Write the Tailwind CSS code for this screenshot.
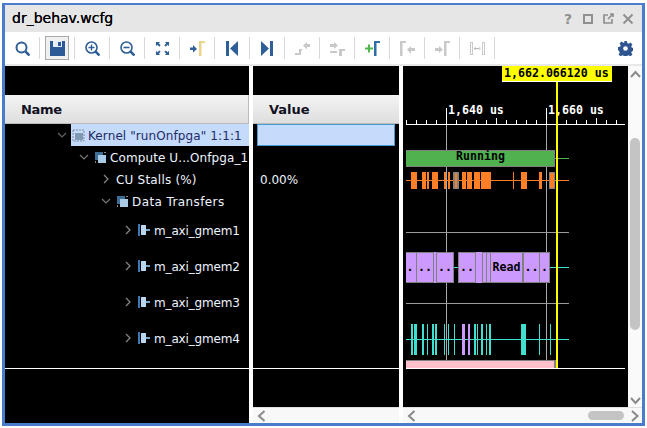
<!DOCTYPE html>
<html lang="en">
<head>
    <meta charset="UTF-8">
    <title>dr_behav.wcfg</title>
    <script src="https://cdn.jsdelivr.net/npm/@tailwindcss/browser@4"></script>
</head>
<body class="bg-white w-[647px] h-[428px] overflow-hidden font-['DejaVu_Sans',sans-serif]">
<div class="ml-[2px] mt-[3px] w-[643px] h-[423px] border-[3px] border-t-[2px] border-[#4a7ccc] flex flex-col bg-white">

    <!-- Title bar -->
    <div class="h-[27px] bg-[#e6e6e6] flex items-center pl-[7px] pr-[7px] shrink-0">
        <span class="text-[14px] text-black [text-shadow:0_0_0.4px_#000]">dr_behav.wcfg</span>
        <div class="ml-auto flex items-center gap-[6px] text-[#909090]">
            <span class="w-[14px] text-center text-[14px] font-bold leading-none">?</span>
            <svg class="w-[14px] h-[14px]" viewBox="0 0 14 14" fill="none" stroke="currentColor" stroke-width="2"><rect x="3" y="3" width="8" height="8"/></svg>
            <svg class="w-[14px] h-[14px]" viewBox="0 0 14 14" fill="none" stroke="currentColor" stroke-width="1.700"><path d="M7 3H3v8h8V7M7 7l5-5M9 2h3v3"/></svg>
            <svg class="w-[14px] h-[14px]" viewBox="0 0 14 14" fill="none" stroke="currentColor" stroke-width="2"><path d="M2.500 2.500l9 9M11.500 2.500l-9 9"/></svg>
        </div>
    </div>

    <!-- Toolbar -->
    <div class="h-[32px] bg-white flex items-center shrink-0">
        <div class="w-[35px] h-[22px] flex items-center justify-center border-r border-[#d8d8d8]">
            <svg class="w-[15px] h-[15px]" viewBox="0 0 15 15" fill="none" stroke="#2f5f97" stroke-width="2"><circle cx="6.500" cy="6.500" r="5"/><path d="M10.500 10.500l4 4" stroke-width="2.500"/></svg>
        </div>
        <div class="w-[35px] h-[22px] flex items-center justify-center border-r border-[#d8d8d8]">
            <div class="w-[24px] h-[24px] bg-[#f0f0f0] border border-[#aaaaaa] flex items-center justify-center">
                <svg class="w-[15px] h-[15px]" viewBox="0 0 15 15"><path d="M0 0h15v15H0z" fill="#2b5a97"/><path d="M3 0h9v6H3z" fill="#e8eef6"/><path d="M8 1h3v4H8z" fill="#2b5a97"/></svg>
            </div>
        </div>
        <div class="w-[35px] h-[22px] flex items-center justify-center border-r border-[#d8d8d8]">
            <svg class="w-[15px] h-[15px]" viewBox="0 0 15 15" fill="none" stroke="#2f5f97" stroke-width="1.600"><circle cx="6.500" cy="6.500" r="5.500"/><path d="M3.500 6.500h6M6.500 3.500v6" stroke-width="1.400"/><path d="M10.500 10.500l4 4" stroke-width="2.500"/></svg>
        </div>
        <div class="w-[35px] h-[22px] flex items-center justify-center border-r border-[#d8d8d8]">
            <svg class="w-[15px] h-[15px]" viewBox="0 0 15 15" fill="none" stroke="#2f5f97" stroke-width="1.600"><circle cx="6.500" cy="6.500" r="5.500"/><path d="M3.500 6.500h6" stroke-width="1.600"/><path d="M10.500 10.500l4 4" stroke-width="2.500"/></svg>
        </div>
        <div class="w-[35px] h-[22px] flex items-center justify-center border-r border-[#d8d8d8]">
            <svg class="w-[15px] h-[15px]" viewBox="0 0 16 16" fill="#2f5f97"><path d="M1 1h4.500L4 2.500 6 4.500 4.500 6 2.500 4 1 5.500zM15 1v4.500L13.500 4l-2 2L10 4.500l2-2L10.500 1zM1 15v-4.500L2.500 12l2-2L6 11.500l-2 2L5.500 15zM15 15h-4.500l1.500-1.500-2-2 1.500-1.500 2 2 1.500-1.500z"/></svg>
        </div>
        <div class="w-[35px] h-[22px] flex items-center justify-center border-r border-[#d8d8d8]">
            <svg class="w-[15px] h-[15px]" viewBox="0 0 15 15"><path d="M0 6.500h3V4l4 4-4 3.500V9H0z" fill="#2f5f97"/><path d="M9 0h6v2h-3.500v13H9z" fill="#e8d48a"/></svg>
        </div>
        <div class="w-[35px] h-[22px] flex items-center justify-center border-r border-[#d8d8d8]">
            <svg class="w-[15px] h-[15px]" viewBox="0 0 15 15" fill="#2f5f97"><path d="M1 0h3v15H1zM13 0v15L5 7.500z"/></svg>
        </div>
        <div class="w-[35px] h-[22px] flex items-center justify-center border-r border-[#d8d8d8]">
            <svg class="w-[15px] h-[15px]" viewBox="0 0 15 15" fill="#2f5f97"><path d="M10 0h3v15h-3zM1 0v15l8-7.500z"/></svg>
        </div>
        <div class="w-[35px] h-[22px] flex items-center justify-center border-r border-[#d8d8d8]">
            <svg class="w-[15px] h-[15px]" viewBox="0 0 15 15" fill="#c9c9c9"><path d="M15 3v3h-3v2.500L8 4.500 12 1v2zM4 8h3v2H6v4H4z"/><path d="M0 12h6v2H0z"/></svg>
        </div>
        <div class="w-[35px] h-[22px] flex items-center justify-center border-r border-[#d8d8d8]">
            <svg class="w-[15px] h-[15px]" viewBox="0 0 15 15" fill="#c9c9c9"><path d="M0 3h4V1l4 3.500L4 8V6H0zM9 8h6v2h-3v5H9z"/><path d="M0 10h7v2H0z"/></svg>
        </div>
        <div class="w-[35px] h-[22px] flex items-center justify-center border-r border-[#d8d8d8]">
            <svg class="w-[15px] h-[15px]" viewBox="0 0 15 15"><path d="M0 6.500h3v-3h2v3h3v2H5v3H3v-3H0z" fill="#4cb84c"/><path d="M9 0h6v2h-3.500v13H9z" fill="#2f6da8"/></svg>
        </div>
        <div class="w-[35px] h-[22px] flex items-center justify-center border-r border-[#d8d8d8]">
            <svg class="w-[15px] h-[15px]" viewBox="0 0 15 15" fill="#c9c9c9"><path d="M0 0h6v2H2.500v13H0zM15 7v3h-4v3L7 8.500 11 5v2z"/></svg>
        </div>
        <div class="w-[35px] h-[22px] flex items-center justify-center border-r border-[#d8d8d8]">
            <svg class="w-[15px] h-[15px]" viewBox="0 0 15 15" fill="#c9c9c9"><path d="M0 7h4V5l4 3.500L4 12v-2H0zM9 0h6v2h-3.500v13H9z"/></svg>
        </div>
        <div class="w-[35px] h-[22px] flex items-center justify-center border-r border-[#d8d8d8]">
            <svg class="w-[15px] h-[15px]" viewBox="0 0 15 15"><path d="M0 1h3v13H0zM12 1h3v13h-3z" fill="#c9c9c9"/><path d="M1 2h1v11H1zM13 2h1v11h-1z" fill="#fff"/><path d="M4 7h7v1H4zM5.500 5.500v4L4 7.500zM9.500 5.500v4l1.500-2z" fill="#b5b5b5"/></svg>
        </div>
        <svg class="ml-auto mr-[9px] w-[15px] h-[15px]" viewBox="0 0 16 16" fill="#2f5590"><path fill-rule="evenodd" d="M6.500 0h3l.4 2.200 1.500.7 1.900-1.300 2.100 2.100-1.300 1.900.7 1.500 2.200.4v3l-2.200.4-.7 1.500 1.300 1.900-2.100 2.100-1.900-1.300-1.500.7-.4 2.200h-3l-.4-2.200-1.500-.7-1.900 1.300-2.100-2.100 1.300-1.900-.7-1.500L0 9.500v-3l2.200-.4.7-1.500-1.300-1.900 2.100-2.100 1.900 1.300 1.500-.7zM8 5.500a2.500 2.500 0 100 5 2.500 2.500 0 000-5z"/></svg>
    </div>

    <div class="h-[2px] bg-[#e8e8e8] shrink-0"></div>

    <!-- Panels -->
    <div class="flex flex-1 min-h-0 bg-white">

        <!-- Name column -->
        <div class="w-[244px] bg-black flex flex-col shrink-0">
            <div class="h-[29px] shrink-0"></div>
            <div class="h-[29px] bg-gradient-to-b from-[#f4f4f4] to-[#dedede] border-b border-r border-[#bbbbbb] flex items-center pl-[16px] pt-[2px] text-[13px] font-bold tracking-[-0.3px] text-[#111122] shrink-0">Name</div>
            <div class="h-[22px] flex items-center text-[12px] text-[#1f2a66]">
                <svg class="ml-[52px] w-[10px] h-[10px]" viewBox="0 0 10 10" fill="none" stroke="#666666" stroke-width="1.200"><path d="M1 3l4 4 4-4"/></svg>
                <div class="ml-[4px] flex-1 h-full bg-[#c5dbfb] flex items-center pl-[1px]">
                    <svg class="w-[13px] h-[13px] mr-[3px]" viewBox="0 0 13 13"><path d="M1 1h11v11H1z" fill="none" stroke="#7a8a9a" stroke-dasharray="2 1"/><path d="M3 4h8v7H3z" fill="#7e9ab2"/></svg>
                    <span class="whitespace-nowrap pt-[2px] tracking-[0.1px]">Kernel "runOnfpga" 1:1:1</span>
                </div>
            </div>
            <div class="h-[22px] flex items-center text-[12px] text-[#eef4ff] overflow-hidden">
                <svg class="ml-[74px] w-[10px] h-[10px] shrink-0" viewBox="0 0 10 10" fill="none" stroke="#777777" stroke-width="1.200"><path d="M1 3l4 4 4-4"/></svg>
                <svg class="ml-[5px] mr-[3px] w-[13px] h-[13px] shrink-0" viewBox="0 0 13 13"><path d="M1 1h8v8H1z" fill="#3f6c94"/><path d="M4 4h8v8H4z" fill="#a9cbe6"/><path d="M10 1h2v1h-2zM1 10h1v2H1z" fill="#888888"/></svg>
                <span class="whitespace-nowrap pt-[2px] tracking-[0.1px]">Compute U...Onfpga_1</span>
            </div>
            <div class="h-[22px] flex items-center text-[12px] text-[#eef4ff]">
                <svg class="ml-[96px] w-[10px] h-[10px]" viewBox="0 0 10 10" fill="none" stroke="#888888" stroke-width="1.200"><path d="M3 1l4 4-4 4"/></svg>
                <span class="ml-[5px] whitespace-nowrap pt-[2px] tracking-[0.2px]">CU Stalls (%)</span>
            </div>
            <div class="h-[22px] flex items-center text-[12px] text-[#eef4ff]">
                <svg class="ml-[96px] w-[10px] h-[10px]" viewBox="0 0 10 10" fill="none" stroke="#777777" stroke-width="1.200"><path d="M1 3l4 4 4-4"/></svg>
                <svg class="ml-[5px] mr-[3px] w-[13px] h-[13px]" viewBox="0 0 13 13"><path d="M1 1h8v8H1z" fill="#3f6c94"/><path d="M4 4h8v8H4z" fill="#a9cbe6"/><path d="M10 1h2v1h-2zM1 10h1v2H1z" fill="#888888"/></svg>
                <span class="whitespace-nowrap pt-[2px] tracking-[0.4px]">Data Transfers</span>
            </div>
            <div class="h-[36px] flex items-center text-[12px] text-[#eef4ff]">
                <svg class="ml-[118px] w-[10px] h-[10px]" viewBox="0 0 10 10" fill="none" stroke="#888888" stroke-width="1.200"><path d="M3 1l4 4-4 4"/></svg>
                <svg class="ml-[5px] mr-[3px] w-[13px] h-[12px]" viewBox="0 0 13 12"><path d="M0 0h2v12H0z" fill="#3f78b4"/><path d="M3 1h5v10H3z" fill="#b9d6ee"/><path d="M8 5h4v2H8z" fill="#7fa6c8"/></svg>
                <span class="whitespace-nowrap pt-[2px] tracking-[-0.15px]">m_axi_gmem1</span>
            </div>
            <div class="h-[36px] flex items-center text-[12px] text-[#eef4ff]">
                <svg class="ml-[118px] w-[10px] h-[10px]" viewBox="0 0 10 10" fill="none" stroke="#888888" stroke-width="1.200"><path d="M3 1l4 4-4 4"/></svg>
                <svg class="ml-[5px] mr-[3px] w-[13px] h-[12px]" viewBox="0 0 13 12"><path d="M0 0h2v12H0z" fill="#3f78b4"/><path d="M3 1h5v10H3z" fill="#b9d6ee"/><path d="M8 5h4v2H8z" fill="#7fa6c8"/></svg>
                <span class="whitespace-nowrap pt-[2px] tracking-[-0.15px]">m_axi_gmem2</span>
            </div>
            <div class="h-[36px] flex items-center text-[12px] text-[#eef4ff]">
                <svg class="ml-[118px] w-[10px] h-[10px]" viewBox="0 0 10 10" fill="none" stroke="#888888" stroke-width="1.200"><path d="M3 1l4 4-4 4"/></svg>
                <svg class="ml-[5px] mr-[3px] w-[13px] h-[12px]" viewBox="0 0 13 12"><path d="M0 0h2v12H0z" fill="#3f78b4"/><path d="M3 1h5v10H3z" fill="#b9d6ee"/><path d="M8 5h4v2H8z" fill="#7fa6c8"/></svg>
                <span class="whitespace-nowrap pt-[2px] tracking-[-0.15px]">m_axi_gmem3</span>
            </div>
            <div class="h-[36px] flex items-center text-[12px] text-[#eef4ff]">
                <svg class="ml-[118px] w-[10px] h-[10px]" viewBox="0 0 10 10" fill="none" stroke="#888888" stroke-width="1.200"><path d="M3 1l4 4-4 4"/></svg>
                <svg class="ml-[5px] mr-[3px] w-[13px] h-[12px]" viewBox="0 0 13 12"><path d="M0 0h2v12H0z" fill="#3f78b4"/><path d="M3 1h5v10H3z" fill="#b9d6ee"/><path d="M8 5h4v2H8z" fill="#7fa6c8"/></svg>
                <span class="whitespace-nowrap pt-[2px] tracking-[-0.15px]">m_axi_gmem4</span>
            </div>
            <div class="h-[12px]"></div>
            <div class="h-px bg-white"></div>
        </div>

        <div class="w-[4px] bg-white shrink-0"></div>

        <!-- Value column -->
        <div class="w-[146px] flex flex-col shrink-0">
            <div class="flex-1 bg-black flex flex-col min-h-0">
                <div class="h-[29px] shrink-0"></div>
                <div class="h-[29px] bg-gradient-to-b from-[#f4f4f4] to-[#dedede] border-b border-[#bbbbbb] flex items-center pl-[16px] pt-[2px] text-[13px] font-bold text-[#111122] shrink-0">Value</div>
                <div class="h-[22px] pl-[4px] pr-[4px] shrink-0"><div class="h-full bg-[#c5dbfb] border border-[#4a9ad4]"></div></div>
                <div class="h-[22px] shrink-0"></div>
                <div class="h-[22px] pl-[7px] pt-[2px] flex items-center text-[12px] text-[#eef4ff] shrink-0">0.00%</div>
                <div class="h-[22px] shrink-0"></div>
                <div class="h-[144px] shrink-0"></div>
                <div class="h-[12px] shrink-0"></div>
                <div class="h-px bg-white shrink-0"></div>
            </div>
            <div class="h-[16px] bg-[#f8f8f8] border-t border-[#e0e0e0] flex items-center pl-[4px] shrink-0">
                <svg class="w-[9px] h-[12px]" viewBox="0 0 9 12" fill="none" stroke="#8a8a8a" stroke-width="2"><path d="M7.500 1L2 6l5.500 5"/></svg>
            </div>
        </div>

        <div class="w-[4px] bg-white shrink-0"></div>

        <!-- Waveform -->
        <div class="w-[239px] flex flex-col shrink-0">
            <div class="flex flex-1 min-h-0">
                <svg class="w-[225px] h-[342px] shrink-0 bg-black" viewBox="403 66 225 342" shape-rendering="crispEdges" font-family="'DejaVu Sans Mono', monospace" font-size="11.600" font-weight="bold">
                    <!-- cursors and grid -->
                    <path d="M446 108v260M546 108v260" stroke="#aaaaaa" stroke-width="1" transform="translate(.5 0)"/>
                    <path d="M446 108v16M546 108v16" stroke="#ffffff" transform="translate(.5 0)"/>
                    <!-- ruler -->
                    <rect x="406" y="124" width="219" height="1" fill="#fff"/>
                    <path transform="translate(.5 0)" stroke="#fff" d="M406 120v4M416 120v4M426 120v4M436 120v4M456 120v4M466 120v4M476 120v4M486 120v4M506 120v4M516 120v4M526 120v4M536 120v4M556 120v4M566 120v4M576 120v4M586 120v4M606 120v4M616 120v4M496 118v6M596 118v6"/>
                    <text x="448" y="114" fill="#fff">1,640 us</text>
                    <text x="548" y="114" fill="#fff">1,660 us</text>
                    <!-- running -->
                    <rect x="555" y="158" width="14" height="1" fill="#4fb24f"/>
                    <rect x="406" y="150" width="149" height="17" fill="#808080"/>
                    <rect x="406" y="151" width="148" height="15" fill="#4fb24f"/>
                    <text x="480.500" y="160" fill="#000" text-anchor="middle">Running</text>
                    <!-- CU stalls -->
                    <rect x="406" y="180" width="163" height="1" fill="#ff7f27"/>
                    <path fill="#ff7f27" d="M411 172h6v17h-6zM422 172h4v17h-4zM427 172h2v17h-2zM432 172h6v17h-6zM444 172h2v17h-2zM448 172h2v17h-2zM462 172h4v17h-4zM467 172h5v17h-5zM474 172h6v17h-6zM481 172h10v17h-10zM513 172h1v17h-1zM521 172h6v17h-6zM539 172h3v17h-3z"/>
                    <rect x="453" y="172" width="6" height="17" fill="#808080"/>
                    <rect x="455" y="173" width="2" height="15" fill="#ff7f27"/>
                    <rect x="549" y="172" width="6" height="17" fill="#808080"/>
                    <rect x="550" y="173" width="4" height="15" fill="#ff7f27"/>
                    <!-- gmem1 -->
                    <rect x="406" y="232" width="163" height="1" fill="#9a9a9a"/>
                    <!-- gmem2 -->
                    <rect x="406" y="267" width="163" height="1" fill="#40e0d0"/>
                    <rect x="406" y="252" width="48" height="31" fill="#808080"/>
                    <rect x="458" y="252" width="92" height="31" fill="#808080"/>
                    <g fill="#cc99ff">
                        <rect x="406" y="253" width="10" height="29"/>
                        <rect x="417" y="253" width="16" height="29"/>
                        <rect x="434" y="252" width="2" height="31"/>
                        <rect x="437" y="253" width="16" height="29"/>
                        <rect x="459" y="253" width="16" height="29"/>
                        <rect x="476" y="252" width="6" height="31"/>
                        <rect x="483" y="253" width="3" height="29"/>
                        <rect x="487" y="253" width="3" height="29"/>
                        <rect x="491" y="253" width="31" height="29"/>
                        <rect x="524" y="253" width="15" height="29"/>
                        <rect x="540" y="253" width="9" height="29"/>
                    </g>
                    <g fill="#000" text-anchor="middle">
                        <text x="410" y="271">.</text>
                        <text x="425" y="271">..</text>
                        <text x="445" y="271">..</text>
                        <text x="467" y="271">..</text>
                        <text x="506.500" y="271">Read</text>
                        <text x="531.500" y="271">..</text>
                        <text x="544.500" y="271">.</text>
                    </g>
                    <!-- gmem3 -->
                    <rect x="406" y="303" width="163" height="1" fill="#9a9a9a"/>
                    <!-- gmem4 -->
                    <rect x="406" y="339" width="163" height="1" fill="#40e0d0"/>
                    <path fill="#40e0d0" d="M411 324h2v31h-2zM414 324h3v31h-3zM422 324h2v31h-2zM427 324h1v31h-1zM432 324h2v31h-2zM435 324h2v31h-2zM444 324h1v31h-1zM448 324h1v31h-1zM454 324h1v31h-1zM474 324h2v31h-2zM477 324h1v31h-1zM481 324h2v31h-2zM486 324h1v31h-1zM489 324h2v31h-2zM521 324h5v31h-5zM539 324h1v31h-1zM550 324h1v31h-1z"/>
                    <path fill="#cc99ff" d="M462 324h3v31h-3zM468 324h2v31h-2z"/>
                    <!-- pink bar -->
                    <rect x="406" y="360" width="150" height="8" fill="#808080"/>
                    <rect x="406" y="361" width="148" height="7" fill="#ffc0cb"/>
                    <rect x="406" y="368" width="219" height="1" fill="#fff"/>
                    <!-- main cursor -->
                    <rect x="556" y="82" width="2" height="286" fill="#ffff00"/>
                    <rect x="502" y="66" width="110" height="16" fill="#ffff00"/>
                    <rect x="502" y="81" width="110" height="1" fill="#fff"/>
                    <text x="504" y="77" fill="#000">1,662.066120 us</text>
                </svg>
                <!-- vertical scrollbar -->
                <div class="flex-1 bg-[#fafafa] relative">
                    <svg class="absolute top-[4px] left-[2px] w-[11px] h-[8px]" viewBox="0 0 11 8" fill="none" stroke="#8a8a8a" stroke-width="2"><path d="M1 7l4.500-5L10 7"/></svg>
                    <div class="absolute top-[72px] left-[2px] w-[10px] h-[192px] rounded-[5px] bg-[#c4c4c4]"></div>
                    <svg class="absolute bottom-[2px] left-[2px] w-[11px] h-[8px]" viewBox="0 0 11 8" fill="none" stroke="#8a8a8a" stroke-width="2"><path d="M1 1l4.500 5L10 1"/></svg>
                </div>
            </div>
            <!-- horizontal scrollbar -->
            <div class="h-[16px] bg-[#f8f8f8] border-t border-[#e0e0e0] flex items-center pl-[4px] shrink-0">
                <svg class="w-[9px] h-[12px]" viewBox="0 0 9 12" fill="none" stroke="#8a8a8a" stroke-width="2"><path d="M7.500 1L2 6l5.500 5"/></svg>
                <div class="ml-[172px] w-[36px] h-[9px] rounded-[5px] bg-[#c4c4c4]"></div>
                <svg class="ml-[6px] w-[9px] h-[12px]" viewBox="0 0 9 12" fill="none" stroke="#8a8a8a" stroke-width="2"><path d="M2 1l5.500 5L2 11"/></svg>
            </div>
        </div>
    </div>
</div>
</body>
</html>
